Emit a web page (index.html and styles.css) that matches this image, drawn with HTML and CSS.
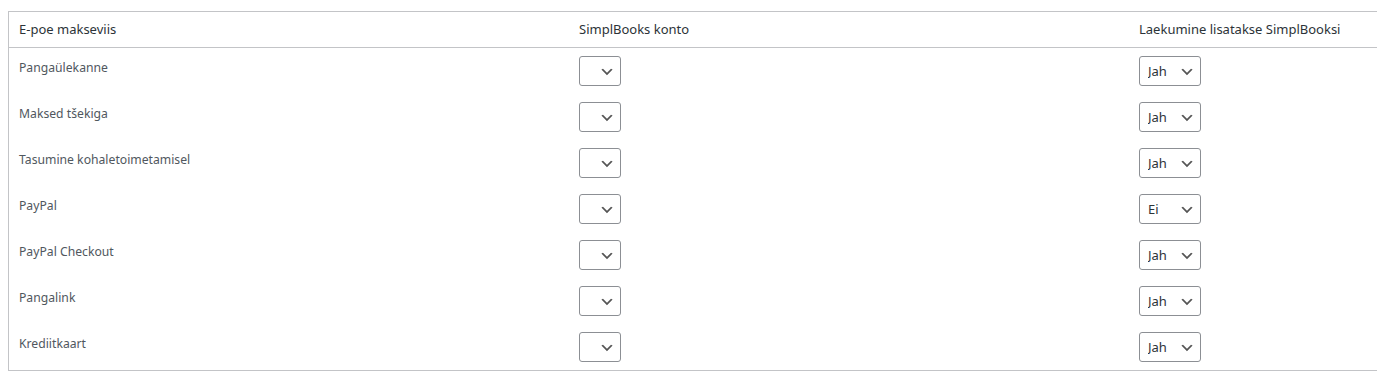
FILE: index.html
```html
<!DOCTYPE html>
<html lang="et">
<head>
  <meta charset="UTF-8" />
  <meta name="viewport" content="width=device-width, initial-scale=1.0" />
  <title>SimplBooks makseviisid</title>
  <link rel="stylesheet" href="styles.css">
</head>
<body>

<table class="widefat">
  <thead>
    <tr>
      <th class="col-method">E-poe makseviis</th>
      <th class="col-account">SimplBooks konto</th>
      <th>Laekumine lisatakse SimplBooksi</th>
    </tr>
  </thead>
  <tbody>
    <tr>
      <td class="method">Pangaülekanne</td>
      <td><select class="account"><option></option></select></td>
      <td><select class="yesno"><option selected>Jah</option><option>Ei</option></select></td>
    </tr>
    <tr>
      <td class="method">Maksed tšekiga</td>
      <td><select class="account"><option></option></select></td>
      <td><select class="yesno"><option selected>Jah</option><option>Ei</option></select></td>
    </tr>
    <tr>
      <td class="method">Tasumine kohaletoimetamisel</td>
      <td><select class="account"><option></option></select></td>
      <td><select class="yesno"><option selected>Jah</option><option>Ei</option></select></td>
    </tr>
    <tr>
      <td class="method">PayPal</td>
      <td><select class="account"><option></option></select></td>
      <td><select class="yesno"><option>Jah</option><option selected>Ei</option></select></td>
    </tr>
    <tr>
      <td class="method">PayPal Checkout</td>
      <td><select class="account"><option></option></select></td>
      <td><select class="yesno"><option selected>Jah</option><option>Ei</option></select></td>
    </tr>
    <tr>
      <td class="method">Pangalink</td>
      <td><select class="account"><option></option></select></td>
      <td><select class="yesno"><option selected>Jah</option><option>Ei</option></select></td>
    </tr>
    <tr>
      <td class="method">Krediitkaart</td>
      <td><select class="account"><option></option></select></td>
      <td><select class="yesno"><option selected>Jah</option><option>Ei</option></select></td>
    </tr>
  </tbody>
</table>

</body>
</html>
```

FILE: styles.css
```css
body {
  font-family: 'Noto Sans', 'Open Sans', sans-serif;
  background: #fff;
  color: #3c434a;
  margin: 0;
  padding: 11px 0 0 8px;
}
.widefat {
  width: 1369px;
  border: 1px solid #c3c4c7;
  border-right: 0;
  border-spacing: 0;
  table-layout: fixed;
}
.widefat th {
  text-align: left;
  font-weight: normal;
  font-size: 13px;
  line-height: 19px;
  color: #2c3338;
  padding: 8px 10px;
  border-bottom: 1px solid #c3c4c7;
  white-space: nowrap;
}
.widefat th.col-method,
.widefat th.col-account {
  width: 540px;
}
.widefat td {
  font-size: 12.2px;
  line-height: 30px;
  color: #50575e;
  padding: 8px 10px;
  vertical-align: top;
}
.widefat td.method {
  line-height: 23px;
}
select {
  appearance: none;
  -webkit-appearance: none;
  box-sizing: border-box;
  height: 30px;
  vertical-align: top;
  font-family: inherit;
  font-size: 13px;
  line-height: 28px;
  color: #2c3338;
  border: 1px solid #8c8f94;
  border-radius: 3px;
  padding: 0 24px 0 8px;
  margin: 0;
  background: #fff url("data:image/svg+xml;charset=US-ASCII,%3Csvg%20width%3D%2220%22%20height%3D%2220%22%20xmlns%3D%22http%3A%2F%2Fwww.w3.org%2F2000%2Fsvg%22%3E%3Cpath%20d%3D%22M5%206l5%205%205-5%202%201-7%207-7-7%202-1z%22%20fill%3D%22%23555%22%2F%3E%3C%2Fsvg%3E") no-repeat right 5px top 55%;
  background-size: 16px 16px;
}
select.account {
  width: 42px;
}
select.yesno {
  width: 62px;
}
```
